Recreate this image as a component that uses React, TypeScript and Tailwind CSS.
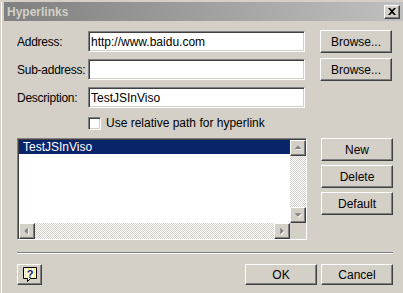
import React from "react";

const raised =
  "border border-t-white border-l-white border-r-[#404040] border-b-[#404040] shadow-[inset_-1px_-1px_0_#808080,inset_1px_1px_0_#d4d0c8] bg-[#d4d0c8]";
const sunken =
  "border border-t-[#808080] border-l-[#808080] border-r-white border-b-white shadow-[inset_1px_1px_0_#404040,inset_-1px_-1px_0_#d4d0c8] bg-white";
const checker =
  "bg-[repeating-conic-gradient(#ffffff_0%_25%,#d4d0c8_0%_50%)] bg-[length:2px_2px]";

const Button = ({ label, className = "" }: { label: string; className?: string }) => (
  <div className={`${raised} flex items-center justify-center text-black ${className}`}>
    {label}
  </div>
);

const Arrow = ({ dir }: { dir: "up" | "down" | "left" | "right" }) => {
  const pts = {
    up: "4,9 8,5 12,9",
    down: "4,6 8,10 12,6",
    left: "9,4 5,8 9,12",
    right: "6,4 10,8 6,12",
  }[dir];
  return (
    <div className={`${raised} w-4 h-4 shrink-0 relative`}>
      <svg width="14" height="14" viewBox="0 0 16 16" className="absolute left-0 top-0">
        <polygon points={pts} fill="#ffffff" transform="translate(1,1)" />
        <polygon points={pts} fill="#808080" />
      </svg>
    </div>
  );
};

const Field = ({ label, value, browse }: { label: string; value?: string; browse?: boolean }) => (
  <div className="flex items-center h-[23px]">
    <div className="w-[71px] shrink-0 whitespace-nowrap tracking-[-0.25px]">{label}</div>
    <div className={`${sunken} w-[217px] h-[21px] flex items-center px-[2px]`}>{value}</div>
    {browse && <Button label="Browse..." className="ml-[15px] w-[72px] h-[23px]" />}
  </div>
);

export default function App() {
  return (
    <div className="w-[403px] h-[293px] bg-[#d4d0c8] overflow-hidden pt-[2px] text-[12px] leading-none font-['Liberation_Sans',Arial,sans-serif] text-black">
      <div className="ml-[1px] h-full border-l border-white pl-[2px]">
        <div className="h-[19px] flex items-center justify-between bg-gradient-to-r from-[#808080] to-[#c0c0c0] pl-[3px] pr-[3px]">
          <span className="font-bold text-[#d4d0c8] text-[12px]">Hyperlinks</span>
          <div className={`${raised} w-4 h-[14px] flex items-center justify-center`}>
            <svg width="8" height="7" viewBox="0 0 8 7">
              <path d="M0 0h2l2 2 2-2h2L5 3.5 8 7H6L4 5 2 7H0l3-3.5z" fill="#000" />
            </svg>
          </div>
        </div>

        <div className="pl-[13px] pt-[9px]">
          <div className="flex flex-col gap-[5px]">
            <Field label="Address:" value="http://www.baidu.com" browse />
            <Field label="Sub-address:" browse />
            <Field label="Description:" value="TestJSInViso" />
          </div>
          <div className="flex items-center mt-[8px] ml-[71px] h-[12px]">
            <div className={`${sunken} w-[13px] h-[13px]`} />
            <span className="ml-[5px]">Use relative path for hyperlink</span>
          </div>

          <div className="flex mt-[9px]">
            <div className={`${sunken} w-[290px] h-[102px] flex flex-col`}>
              <div className="flex flex-1 pt-[1px] pl-[1px]">
                <div className="flex-1">
                  <div className="h-[14px] bg-[#0a246a] text-white flex items-center pl-[4px]">TestJSInViso</div>
                </div>
                <div className={`w-4 flex flex-col ${checker}`}>
                  <Arrow dir="up" />
                  <div className="flex-1" />
                  <Arrow dir="down" />
                </div>
              </div>
              <div className="flex h-4 pl-[1px]">
                <div className={`flex-1 flex ${checker}`}>
                  <Arrow dir="left" />
                  <div className="flex-1" />
                  <Arrow dir="right" />
                </div>
                <div className="w-4 bg-[#d4d0c8]" />
              </div>
            </div>
            <div className="ml-[14px] flex flex-col gap-[4px]">
              <Button label="New" className="w-[72px] h-[23px]" />
              <Button label="Delete" className="w-[72px] h-[23px]" />
              <Button label="Default" className="w-[72px] h-[23px]" />
            </div>
          </div>

          <div className="mt-[12px] w-[376px] border-t border-[#808080] border-b border-b-white" />

          <div className="flex items-center mt-[10px] w-[376px]">
            <div className={`${raised} w-[25px] h-[21px] flex items-center justify-center`}>
              <svg width="16" height="17" viewBox="0 0 16 17">
                <path d="M1.5 1.5h13v11h-6l-3 3v-3h-4z" fill="#fffde0" stroke="#000" />
                <path d="M3 3h1M6 3h1M9 3h1M12 3h1M3 11h1M12 11h1M3 6h1M3 9h1M12 6h1M12 9h1" stroke="#e0d000" />
                <text x="8" y="11.5" textAnchor="middle" fontSize="11" fontWeight="bold" fill="#0a246a" fontFamily="Liberation Sans, sans-serif">?</text>
              </svg>
            </div>
            <div className="flex-1" />
            <Button label="OK" className="w-[72px] h-[21px]" />
            <Button label="Cancel" className="ml-[4px] w-[72px] h-[21px]" />
          </div>
        </div>
      </div>
    </div>
  );
}
